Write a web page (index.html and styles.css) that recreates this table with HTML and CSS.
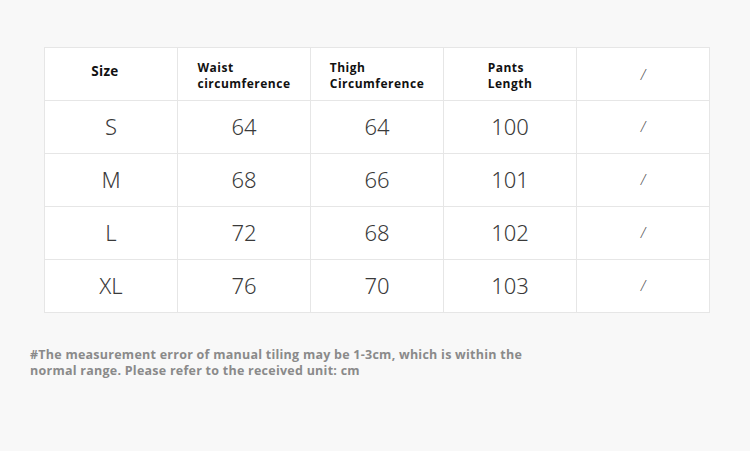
FILE: index.html
```html
<!DOCTYPE html>
<html>
<head>
<meta charset="utf-8">
<link rel="stylesheet" href="styles.css">
</head>
<body>
<div class="page">
  <div class="table">
    <div class="cell head"><span class="lbl size">Size</span></div>
    <div class="cell head"><span class="lbl">Waist<br>circumference</span></div>
    <div class="cell head"><span class="lbl">Thigh<br>Circumference</span></div>
    <div class="cell head"><span class="lbl">Pants<br>Length</span></div>
    <div class="cell head"><span class="slash">/</span></div>

    <div class="cell">S</div><div class="cell">64</div><div class="cell">64</div><div class="cell">100</div><div class="cell"><span class="slash">/</span></div>
    <div class="cell">M</div><div class="cell">68</div><div class="cell">66</div><div class="cell">101</div><div class="cell"><span class="slash">/</span></div>
    <div class="cell">L</div><div class="cell">72</div><div class="cell">68</div><div class="cell">102</div><div class="cell"><span class="slash">/</span></div>
    <div class="cell">XL</div><div class="cell">76</div><div class="cell">70</div><div class="cell">103</div><div class="cell"><span class="slash">/</span></div>
  </div>
  <p class="note">#The measurement error of manual tiling may be 1-3cm, which is within the<br>normal range. Please refer to the received unit: cm</p>
</div>
</body>
</html>
```
FILE: styles.css
```css
html, body {
  margin: 0;
  padding: 0;
  background: #f8f8f8;
}
.page {
  width: 750px;
  height: 451px;
  padding: 47px 0 0 44px;
  box-sizing: border-box;
}
.table {
  display: grid;
  grid-template-columns: repeat(5, 133px);
  grid-auto-rows: 53px;
  width: 666px;
  background: #ffffff;
  border-left: 1px solid #e6e6e6;
  border-top: 1px solid #e6e6e6;
  box-sizing: border-box;
  height: 266px;
}
.cell {
  border-right: 1px solid #e6e6e6;
  border-bottom: 1px solid #e6e6e6;
  display: flex;
  align-items: center;
  justify-content: center;
  font-family: "Noto Sans", sans-serif;
  font-weight: 300;
  font-size: 22px;
  color: #3a3a3a;
  padding-bottom: 2px;
}
.head {
  font-family: "Open Sans", sans-serif;
  font-weight: 700;
  font-size: 12px;
  color: #111;
  padding-bottom: 0;
}
.lbl {
  text-align: left;
  line-height: 16px;
  letter-spacing: 0.5px;
  padding-top: 3px;
}
.lbl.size {
  margin-right: 12px;
  padding-top: 0;
  padding-bottom: 6px;
  font-size: 13.5px;
  letter-spacing: 0.3px;
}
.slash {
  font-family: "Noto Sans", sans-serif;
  font-weight: 300;
  font-size: 14px;
  color: #555;
  font-style: italic;
}
.note {
  margin: 34px 0 0 -14px;
  font-family: "Open Sans", sans-serif;
  font-weight: 700;
  font-size: 12.5px;
  line-height: 16px;
  letter-spacing: 0.25px;
  color: #8a8a8a;
}
```
